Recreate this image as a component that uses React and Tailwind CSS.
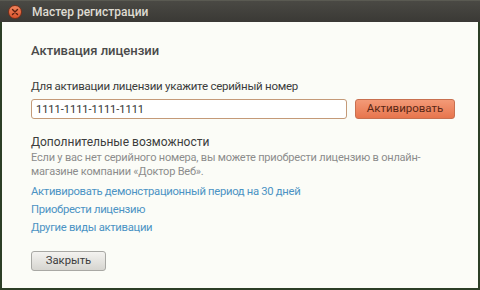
export default function App() {
  return (
    <div
      className="w-[480px] h-[290px] bg-[#2c3f26] flex flex-col pl-[2px] pr-[2px] pb-[2px] overflow-hidden"
      style={{ fontFamily: 'Roboto, "Noto Sans", sans-serif' }}
    >
      {/* Title bar */}
      <div className="h-[22px] shrink-0 flex items-center bg-gradient-to-b from-[#4a4944] to-[#3a3935] border-t border-[#5a5a52] -mx-[2px] px-[8px]">
        <div className="w-[14px] h-[14px] rounded-full bg-gradient-to-b from-[#f2845c] to-[#d9532c] border border-[#7a2e18] flex items-center justify-center">
          <svg width="8" height="8" viewBox="0 0 8 8">
            <path d="M1.5 1.5 L6.5 6.5 M6.5 1.5 L1.5 6.5" stroke="#5a2010" strokeWidth="1.4" strokeLinecap="round" />
          </svg>
        </div>
        <span className="ml-[10px] text-[12px] font-medium text-[#dfdbd2] leading-none">Мастер регистрации</span>
      </div>

      {/* Body */}
      <div className="flex-1 bg-[#fbfcf7] pl-[29px] pr-[23px] flex flex-col whitespace-nowrap">
        <h1 className="mt-[19px] text-[13px] font-medium text-[#4a4a4a] leading-[20px]">Активация лицензии</h1>

        <p className="mt-[17px] text-[11.5px] tracking-[-0.25px] text-[#3c3c3c] leading-[16px]">
          Для активации лицензии укажите серийный номер
        </p>
        <div className="mt-[5px] flex items-center gap-[8px]">
          <input
            className="w-[316px] h-[20px] border border-[#c49a78] rounded-[3px] bg-white px-[4px] text-[11px] text-[#333] outline-none"
            defaultValue="1111-1111-1111-1111"
          />
          <button className="w-[100px] h-[20px] rounded-[3px] border border-[#c8704f] bg-gradient-to-b from-[#f39a77] to-[#e7754d] text-[11.5px] text-[#5b2816] leading-none">
            Активировать
          </button>
        </div>

        <p className="mt-[15px] text-[12px] text-[#3c3c3c] leading-[16px]">Дополнительные возможности</p>
        <p className="mt-[1px] text-[11px] tracking-[-0.2px] text-[#8c8c8c] leading-[14px]">
          Если у вас нет серийного номера, вы можете приобрести лицензию в онлайн-
          <br />
          магазине компании «Доктор Веб».
        </p>

        <div className="mt-[5px] flex flex-col gap-[3px] text-[11.25px] tracking-[-0.3px] text-[#4b93c4] leading-[15px]">
          <a>Активировать демонстрационный период на 30 дней</a>
          <a>Приобрести лицензию</a>
          <a>Другие виды активации</a>
        </div>

        <div className="mt-[12px]">
          <button className="w-[75px] h-[20px] rounded-[3px] border border-[#a8a8a4] bg-gradient-to-b from-[#f4f3f0] to-[#d6d5d0] text-[11.25px] text-[#3c3c3c] leading-none">
            Закрыть
          </button>
        </div>
      </div>
    </div>
  );
}
